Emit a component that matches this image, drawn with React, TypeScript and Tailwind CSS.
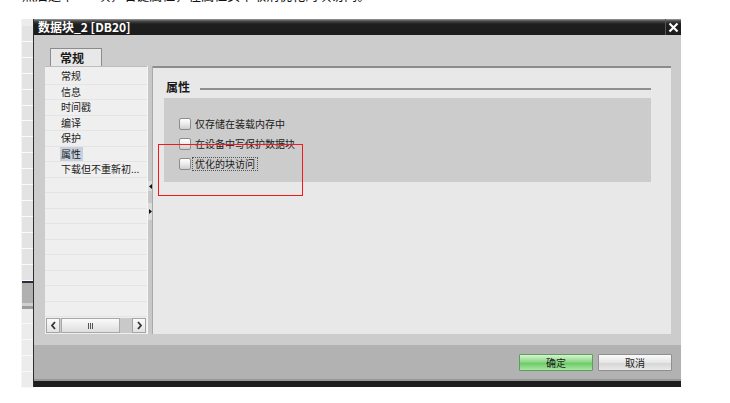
import React from 'react';

const font = "font-['Noto_Sans_CJK_SC','Noto_Sans',sans-serif]";

const menuItems = ['常规', '信息', '时间戳', '编译', '保护', '属性', '下载但不重新初...'];

const options = [
  { label: '仅存储在装载内存中', focused: false },
  { label: '在设备中写保护数据块', focused: false },
  { label: '优化的块访问', focused: true },
];

function Checkbox() {
  return (
    <span className="w-[12px] h-[12px] shrink-0 rounded-[2px] border border-[#8d8d8d] bg-[linear-gradient(to_bottom,#ffffff,#f0f0f0_40%,#cfcfcf)]" />
  );
}

function ScrollButton({ dir }: { dir: 'left' | 'right' }) {
  return (
    <div className="w-[14px] h-[15px] flex items-center justify-center border border-[#a4a4a4] bg-[linear-gradient(to_bottom,#fbfbfb,#e2e2e2)]">
      <svg width="7" height="9" viewBox="0 0 7 9">
        <path
          d={dir === 'left' ? 'M5 1 L2 4.5 L5 8' : 'M2 1 L5 4.5 L2 8'}
          fill="none"
          stroke="#333"
          strokeWidth="1.8"
        />
      </svg>
    </div>
  );
}

function SideList() {
  const rows = Array.from({ length: 16 }, (_, i) => menuItems[i] ?? '');
  return (
    <div className="w-[102px] h-full flex flex-col bg-[#efefef] border-t border-[#bdbdbd]">
      <div className="flex-1 pt-[2px] overflow-hidden">
        {rows.map((text, i) => (
          <div key={i} className="h-[15.5px] border-b border-[#e4e4e4] pl-[15px] flex items-center">
            {text && (
              <span
                className={`whitespace-nowrap text-[10px] leading-[14px] text-[#1a1a1a] px-[1px] ${
                  text === '属性' ? 'bg-[#c6d1dd] pr-[2px]' : ''
                }`}
              >
                {text}
              </span>
            )}
          </div>
        ))}
      </div>
      <div className="h-[16px] flex items-start px-[1px] bg-[#efefef]">
        <ScrollButton dir="left" />
        <div className="flex-1 h-[15px] bg-[#c9c9c9] flex">
          <div className="ml-[1px] w-[59px] h-[15px] border border-[#a8a8a8] bg-[linear-gradient(to_bottom,#fafafa,#dedede)] flex items-center justify-center gap-[1px]">
            <span className="w-[1px] h-[6px] bg-[#555]" />
            <span className="w-[1px] h-[6px] bg-[#555]" />
            <span className="w-[1px] h-[6px] bg-[#555]" />
          </div>
        </div>
        <ScrollButton dir="right" />
      </div>
    </div>
  );
}

function Splitter() {
  return (
    <div className="w-[6px] h-full flex flex-col border-l border-[#f6f6f6] border-r border-r-[#a9a9a9] bg-[#c8c8c8]">
      <div className="h-[115px]" />
      <div className="h-[10px] bg-[#dcdcdc] flex items-center justify-center">
        <svg width="3" height="5" viewBox="0 0 3 5">
          <path d="M3 0 L0 2.5 L3 5 Z" fill="#111" />
        </svg>
      </div>
      <div className="h-[12px]" />
      <div className="h-[17px] bg-[#dcdcdc] flex items-center justify-center">
        <svg width="3" height="5" viewBox="0 0 3 5">
          <path d="M0 0 L3 2.5 L0 5 Z" fill="#111" />
        </svg>
      </div>
    </div>
  );
}

function PropertyPanel() {
  return (
    <div className="flex-1 h-full bg-[#e8e8e8] border-t-2 border-[#8c8c8c] pt-[12px] pl-[11px] pr-[20px]">
      <div className="flex items-center h-[14px]">
        <span className="ml-[2px] text-[12px] font-bold leading-[14px] text-[#1a1a1a]">属性</span>
        <span className="flex-1 ml-[10px] mt-[4px] h-[2px] bg-[#8f8f8f]" />
      </div>
      <div className="mt-[4px] h-[84px] bg-[#cccccc] pt-[16px] pl-[15px]">
        {options.map((o) => (
          <div key={o.label} className="h-[20px] flex items-center">
            <Checkbox />
            <span
              className={`ml-[1px] px-[2px] text-[10px] leading-[12px] text-[#1a1a1a] border ${
                o.focused ? 'border-dotted border-[#555]' : 'border-transparent'
              }`}
            >
              {o.label}
            </span>
          </div>
        ))}
      </div>
    </div>
  );
}

function OuterStrip() {
  const top = Array.from({ length: 16 });
  const bottom = Array.from({ length: 5 });
  return (
    <div className="w-[12px] h-[369px] flex flex-col bg-[#e3e3e3] border-l border-[#f4f4f4]">
      <div className="h-[7px] bg-[#ececec]" />
      {top.map((_, i) => (
        <div key={i} className="h-[16px] border-b border-[#fbfbfb]" />
      ))}
      <div className="h-[2px] bg-[#2b2b3a]" />
      <div className="h-[20px] bg-[#b0b0b0]" />
      <div className="h-[3px] bg-[#d0d0d0]" />
      <div className="h-[3px] bg-[#9c9c9c]" />
      {bottom.map((_, i) => (
        <div key={i} className="h-[16px] border-b border-[#f8f8f8] bg-[#ececec]" />
      ))}
    </div>
  );
}

export default function App() {
  return (
    <div className={`w-[730px] h-[403px] bg-white relative overflow-hidden ${font}`}>
      <div className="h-[5px] overflow-hidden pl-[22px]">
        <p className="-mt-[13px] text-[13px] leading-[16px] text-[#111] whitespace-nowrap">
          然后选中 DB 块，右键属性，在属性页中取消优化的块访问。
        </p>
      </div>

      <div className="pt-[14px] pl-[21px] flex items-start">
        <OuterStrip />

        <div className="w-[648px] h-[368px] flex flex-col border-l border-[#2e2e2e]">
          <div className="h-[16px] flex items-center bg-[linear-gradient(to_bottom,#a0a0a0_0px,#4a4a4a_2px,#1f1f1f_5px,#1c1c1c_100%)]">
            <span className="pl-[4px] flex-1 text-[12px] font-bold leading-[14px] text-white">
              数据块_2 [DB20]
            </span>
            <div className="w-[16px] h-full flex items-center justify-center border-l border-[#555]">
              <svg width="11" height="11" viewBox="0 0 11 11">
                <path d="M1.5 1.5 L9.5 9.5 M9.5 1.5 L1.5 9.5" stroke="#fff" strokeWidth="2.2" />
              </svg>
            </div>
          </div>

          <div className="flex-1 flex flex-col bg-[#cccccc]">
            <div className="pt-[13px] pl-[11px] pr-[10px] flex flex-col">
              <div className="ml-[5px] w-[52px] h-[18px] bg-[#e8e8e8] border border-b-0 border-[#8c8c8c] pl-[9px] flex items-center">
                <span className="text-[12px] font-bold leading-[14px] text-[#1a1a1a]">常规</span>
              </div>
              <div className="h-[268px] flex">
                <SideList />
                <Splitter />
                <PropertyPanel />
              </div>
            </div>
            <div className="h-[11px]" />
            <div className="h-[34px] bg-[#b2b2b2] flex justify-end items-start pt-[9px] pr-[9px] gap-[5px]">
              <button className="w-[74px] h-[17px] border border-[#5f9d5f] rounded-[1px] bg-[linear-gradient(to_bottom,#d6f4cf,#8fd88a_45%,#6ccb68_55%,#a9e6a2)] text-[10px] leading-[14px] text-[#1a1a1a]">
                确定
              </button>
              <button className="w-[74px] h-[17px] border border-[#8f8f8f] rounded-[1px] bg-[linear-gradient(to_bottom,#fbfbfb,#e6e6e6_50%,#d6d6d6_55%,#e9e9e9)] text-[10px] leading-[14px] text-[#1a1a1a]">
                取消
              </button>
            </div>
            <div className="h-[2px] bg-[#979797]" />
            <div className="h-[6px] bg-[#1e1e1e]" />
          </div>
        </div>
      </div>

      <div className="absolute left-[158px] top-[144px] w-[145px] h-[52px] border border-[#f01a1a]" />
    </div>
  );
}
